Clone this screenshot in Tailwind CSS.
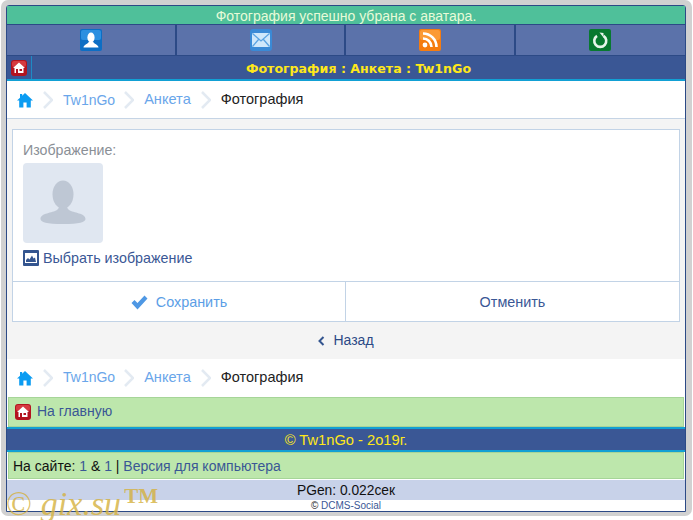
<!DOCTYPE html>
<html lang="ru">

<head>
  <meta charset="UTF-8" />
  <meta name="viewport" content="width=device-width, initial-scale=1" />
  <title>Фотография : Анкета : Tw1nGo</title>
  <script src="https://cdn.jsdelivr.net/npm/@tailwindcss/browser@4"></script>
</head>

<body class="bg-white font-['Liberation_Sans',sans-serif]">
  <div class="relative w-[693px] h-[520px] overflow-hidden">
    <!-- серая рамка окна -->
    <div class="w-[691px] h-[516px] ml-px bg-[#d1d1d1] rounded-[7px] pt-[5px] px-[5px]">
      <div class="w-[680px] h-[507px] border border-[#2c4a86] rounded-t-[3px] bg-white flex flex-col">

        <div class="h-[18px] bg-[#4fc09a] text-[#e8fbd8] text-[14px] leading-[20px] text-center">Фотография успешно убрана с аватара.</div>

        <!-- верхнее меню -->
        <div class="h-[32px] grid grid-cols-4 bg-[#5b72aa] border-y border-[#2c4a86]">
          <a class="flex items-center justify-center border-r-2 border-[#2c4a86] pl-[1px]">
            <svg width="22" height="22" viewBox="0 0 22 22"><rect width="22" height="22" rx="2" fill="#0d6ec4"/><rect x="1" y="1" width="20" height="10" rx="2" fill="#2b8fe0"/><ellipse cx="11" cy="8.500" rx="3.600" ry="5" fill="#fff"/><path d="M3.500 18.500c0-3 5-3.500 5.500-6h4c.5 2.500 5.500 3 5.500 6z" fill="#fff"/></svg>
          </a>
          <a class="flex items-center justify-center border-r-2 border-[#2c4a86] pl-[2px]">
            <svg width="22" height="22" viewBox="0 0 22 22"><rect width="22" height="22" rx="3" fill="#3a8ad6"/><rect x="2" y="4" width="18" height="14" rx="1" fill="#cfe8fb"/><path d="M2.500 4.500 11 12l8.500-7.500M2.500 17.500l6-7M19.500 17.500l-6-7" fill="none" stroke="#5ba4e2" stroke-width="1.300"/></svg>
          </a>
          <a class="flex items-center justify-center border-r-2 border-[#2c4a86]">
            <svg width="22" height="22" viewBox="0 0 22 22"><rect width="22" height="22" rx="2" fill="#f57c10"/><rect x="1" y="1" width="20" height="10" rx="2" fill="#fb9a35"/><circle cx="6" cy="16" r="2.400" fill="#fff"/><path d="M4 9.500A8.500 8.500 0 0 1 12.500 18M4 4.500A13.500 13.500 0 0 1 17.500 18" fill="none" stroke="#fff" stroke-width="2.600"/></svg>
          </a>
          <a class="flex items-center justify-center">
            <svg width="22" height="22" viewBox="0 0 22 22"><rect width="22" height="22" rx="2" fill="#07792f"/><path d="M8 6.800A6 6 0 1 0 14.500 6.800" fill="none" stroke="#e6f5ea" stroke-width="2.600"/><path d="M10.500 3.500 14.500 4v4.500z" fill="#e6f5ea"/></svg>
          </a>
        </div>

        <!-- заголовок -->
        <div class="h-[25px] bg-[#3a5795] border-b-2 border-[#12a0d4] flex">
          <a class="w-[25px] h-[23px] border-r border-[#1f8ac4] flex items-center pl-[4px]">
            <svg width="16" height="16" viewBox="0 0 16 16"><rect width="16" height="16" rx="3" fill="#b3131f"/><rect x="1" y="1" width="14" height="6" rx="2" fill="#d53a40"/><path d="M8 2.500 14 8h-1.500v5h-9V8H2z" fill="#fff"/><rect x="5" y="9" width="2" height="4" fill="#b3131f"/><rect x="8.500" y="9" width="2.500" height="2" fill="#b3131f"/></svg>
          </a>
          <div class="flex-1 text-center text-[#ffe81a] font-bold text-[12.6px] leading-[26px] font-['DejaVu_Sans',sans-serif]">Фотография : Анкета : Tw1nGo</div>
        </div>

        <!-- хлебные крошки -->
        <div class="h-[38px] bg-white border-b border-[#c5d4e5] flex items-center pl-[10px] pt-px text-[14px]">
          <svg width="16" height="16" viewBox="0 0 16 16" class="mr-[10px]"><path d="M8 1 16 8.500h-2.200V15.500H9.600V10.500H6.400V15.500H2.200V8.500H0L3 5.700V2h2.200v1.700z" fill="#0b9cf2"/></svg>
          <svg width="10" height="18" viewBox="0 0 10 18" class="mr-[10px]"><path d="M1 1l8 8-8 8" fill="none" stroke="#e3eaf2" stroke-width="2.500"/></svg>
          <a class="text-[#6aa6ea] mr-[9px]">Tw1nGo</a>
          <svg width="10" height="18" viewBox="0 0 10 18" class="mr-[10px]"><path d="M1 1l8 8-8 8" fill="none" stroke="#e3eaf2" stroke-width="2.500"/></svg>
          <a class="text-[#6aa6ea] text-[14.6px] mr-[10px]">Анкета</a>
          <svg width="10" height="18" viewBox="0 0 10 18" class="mr-[10px]"><path d="M1 1l8 8-8 8" fill="none" stroke="#e3eaf2" stroke-width="2.500"/></svg>
          <span class="text-[#222] text-[14.5px]">Фотография</span>
        </div>

        <!-- форма -->
        <div class="h-[240px] bg-[#f4f4f4] pt-[10px] px-[5px]">
          <div class="h-[193px] w-[668px] bg-white border border-[#c2d3e6] flex flex-col">
            <div class="h-[151px] pl-[10px] pt-[12px]">
              <div class="text-[14.2px] leading-[16px] text-[#8a8f96]">Изображение:</div>
              <div class="w-[80px] h-[80px] mt-[5px] rounded-[4px] bg-[#e0e7f1] flex items-center justify-center">
                <svg width="48" height="48" viewBox="0 0 48 48"><ellipse cx="24" cy="15.500" rx="10.500" ry="14" fill="#bec7d4"/><path d="M1.500 40c0-6 12-6 16.500-9 1-1 2-2 2-4h8c0 2 1 3 2 4 4.500 3 16.500 3 16.500 9 0 3-6 5-22.500 5S1.500 43 1.500 40z" fill="#bec7d4"/></svg>
              </div>
              <a class="flex items-center mt-[7px] text-[14.3px] leading-[16px] text-[#3a5795]">
                <svg width="16" height="16" viewBox="0 0 16 16" class="mr-[4px]"><rect width="16" height="16" rx="1" fill="#34558f"/><rect x="2" y="3" width="12" height="10" fill="#fff"/><path d="M3 12V10l2-2 1.500 1.500L9 5.500l1.500 3L12 7.500l1 4.500z" fill="#34558f"/></svg>
                Выбрать изображение
              </a>
            </div>
            <div class="flex-1 grid grid-cols-2 border-t border-[#c2d3e6] text-[14.4px]">
              <a class="flex items-center justify-center pt-[2px] border-r border-[#c2d3e6] text-[#5b9ee6]">
                <svg width="17" height="15" viewBox="0 0 17 15" class="mr-[8px]"><path d="M0.500 8 3.500 5 6.500 8 13.500 0.500 16.500 3.500 6.500 14.500z" fill="#4f98e4"/></svg>
                Сохранить
              </a>
              <a class="flex items-center justify-center pt-[2px] text-[#3a5795]">Отменить</a>
            </div>
          </div>
          <a class="flex items-center justify-center h-[37px] text-[14px] text-[#2c4a86]">
            <svg width="7" height="10" viewBox="0 0 7 10" class="mr-[8px]"><path d="M5.500 1 1.500 5l4 4" fill="none" stroke="#34558f" stroke-width="2"/></svg>
            Назад
          </a>
        </div>

        <!-- хлебные крошки снизу -->
        <div class="h-[38px] bg-white flex items-center pl-[10px] pb-px text-[14px]">
          <svg width="16" height="16" viewBox="0 0 16 16" class="mr-[10px]"><path d="M8 1 16 8.500h-2.200V15.500H9.600V10.500H6.400V15.500H2.200V8.500H0L3 5.700V2h2.200v1.700z" fill="#0b9cf2"/></svg>
          <svg width="10" height="18" viewBox="0 0 10 18" class="mr-[10px]"><path d="M1 1l8 8-8 8" fill="none" stroke="#e3eaf2" stroke-width="2.500"/></svg>
          <a class="text-[#6aa6ea] mr-[9px]">Tw1nGo</a>
          <svg width="10" height="18" viewBox="0 0 10 18" class="mr-[10px]"><path d="M1 1l8 8-8 8" fill="none" stroke="#e3eaf2" stroke-width="2.500"/></svg>
          <a class="text-[#6aa6ea] text-[14.6px] mr-[10px]">Анкета</a>
          <svg width="10" height="18" viewBox="0 0 10 18" class="mr-[10px]"><path d="M1 1l8 8-8 8" fill="none" stroke="#e3eaf2" stroke-width="2.500"/></svg>
          <span class="text-[#222] text-[14.5px]">Фотография</span>
        </div>

        <!-- на главную -->
        <div class="bg-white px-px">
          <a class="h-[30px] bg-[#bde7ac] border border-[#a6d598] flex items-center pl-[6px] pb-px text-[14px] text-[#3a5795]">
            <svg width="16" height="16" viewBox="0 0 16 16" class="mr-[6px]"><rect width="16" height="16" rx="3" fill="#b3131f"/><rect x="1" y="1" width="14" height="6" rx="2" fill="#d53a40"/><path d="M8 2.500 14 8h-1.500v5h-9V8H2z" fill="#fff"/><rect x="5" y="9" width="2" height="4" fill="#b3131f"/><rect x="8.500" y="9" width="2.500" height="2" fill="#b3131f"/></svg>
            На главную
          </a>
        </div>

        <!-- подвал -->
        <div class="h-[25px] bg-[#3a5795] border-y-2 border-[#12a0d4] text-center text-[#ffe81a] text-[14.7px] leading-[23px]">© Tw1nGo - 2o19г.</div>
        <div class="bg-white px-px pb-px">
          <div class="h-[27px] bg-[#bde7ac] border border-[#a6d598] flex items-center pl-[4px] pt-px text-[14px] text-[#111]">
            На сайте:&nbsp;<a class="text-[#3a5795]">1</a>&nbsp;&amp;&nbsp;<a class="text-[#3a5795]">1</a>&nbsp;|&nbsp;<a class="text-[#3a5795]">Версия для компьютера</a>
          </div>
        </div>
        <div class="h-[20px] bg-[#c8d2e9] text-center text-[13.800px] leading-[22px] text-[#111]">PGen: 0.022сек</div>
        <div class="h-[11px] shrink-0 bg-white text-center text-[10px] leading-[11px] text-[#222]">© <a class="text-[#3a5795]">DCMS-Social</a></div>
      </div>
    </div>

    <!-- водяной знак -->
    <div class="absolute left-[6px] top-[489px] flex items-start font-['Liberation_Serif',serif] text-[#d4b03c]/80 pointer-events-none whitespace-nowrap">
      <span class="text-[34px] leading-[30px]">©</span>
      <span class="text-[34px] leading-[30px] italic ml-[9px]">gix.su</span>
      <span class="text-[21px] leading-[14px] font-bold ml-[3px]">TM</span>
    </div>
  </div>
</body>

</html>
